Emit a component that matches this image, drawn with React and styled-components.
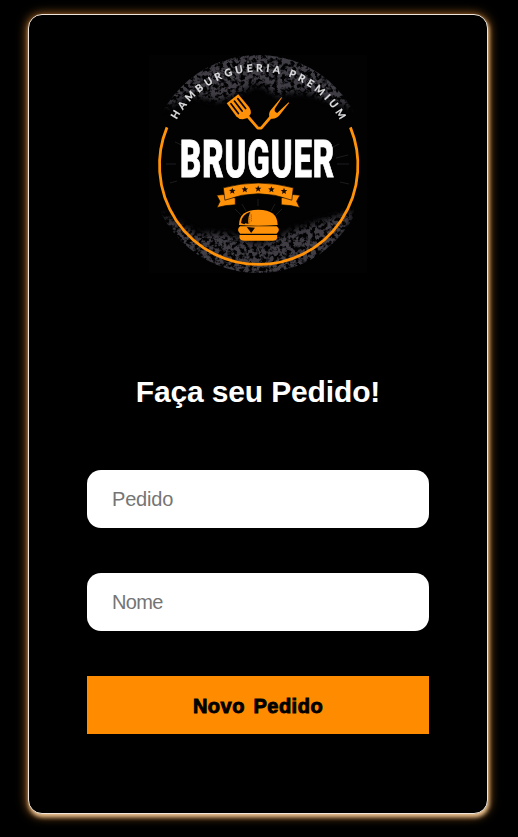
import React from "react";
import styled, { createGlobalStyle } from "styled-components";

const GlobalStyle = createGlobalStyle`
  * { box-sizing: border-box; }
  body { margin: 0; background: #000; font-family: "Liberation Sans", Arial, sans-serif; }
`;

const Page = styled.main`
  min-height: 837px;
  padding: 14px 30px 0 28px;
  background: #000;
`;

const Card = styled.section`
  display: flex;
  flex-direction: column;
  align-items: center;
  height: 800px;
  padding-top: 40px;
  background: #000;
  border: 1px solid #eee6dc;
  border-radius: 14px;
  box-shadow: 1px 3px 4px rgba(255, 218, 170, 0.85), 0 1px 11px rgba(255, 150, 50, 0.85);
`;

const LogoArt = styled.svg`
  display: block;
  width: 218px;
  height: 218px;
  overflow: visible;
`;

const Title = styled.h1`
  margin: 102px 0 0;
  color: #fff;
  font-size: 30px;
  font-weight: 700;
  line-height: 34px;
  letter-spacing: -0.15px;
`;

const Form = styled.form`
  display: flex;
  flex-direction: column;
  gap: 45px;
  width: 342px;
  margin-top: 61px;
`;

const Field = styled.input`
  height: 58px;
  padding: 0 25px;
  border: 0;
  border-radius: 14px;
  background: #fff;
  font: 20px "Liberation Sans", Arial, sans-serif;
  letter-spacing: ${({ $tracking }) => $tracking};
  &::placeholder { color: #757575; }
`;

const SubmitButton = styled.button`
  height: 58px;
  padding: 2px 0 0;
  border: 0;
  background: #ff8c00;
  color: #000;
  font: 700 20px "Liberation Sans", Arial, sans-serif;
  letter-spacing: 0.5px;
  word-spacing: 2.5px;
  -webkit-text-stroke: 0.9px #000;
`;

const starShape = "M0-3.6 1-1.2 3.6-1.1 1.6.6 2.3 3.2 0 1.7-2.3 3.2-1.6.6-3.6-1.1-1-1.2Z";
const stars = [[83.3, 135.9], [95.8, 134.4], [109.2, 133.8], [122.4, 134.4], [135, 136.1]];

function Logo() {
  return (
    <LogoArt viewBox="0 0 218 218" role="img" aria-label="Bruguer">
      <defs>
        <filter id="grain" x="0" y="0" width="100%" height="100%" colorInterpolationFilters="sRGB">
          <feTurbulence type="fractalNoise" baseFrequency="0.24" numOctaves="4" seed="8" />
          <feColorMatrix values="0 0 0 0 .25  0 0 0 0 .24  0 0 0 0 .27  5 0 0 0 -1.85" />
          <feComposite in2="SourceGraphic" operator="in" />
        </filter>
        <filter id="soft" x="-10%" y="-20%" width="120%" height="140%"><feGaussianBlur stdDeviation="3" /></filter>
        <clipPath id="disc"><circle cx="109.3" cy="109" r="109" /></clipPath>
        <path id="arc" d="M16.3 109.5A93 93 0 0 1 202.3 109.5" />
      </defs>
      <rect width="218" height="218" fill="#020203" />
      <g clipPath="url(#disc)">
        <g filter="url(#grain)">
          <path filter="url(#soft)" d="M12 54Q45-12 109-4 175-12 205 54L172 42Q145 32 130 41L109 28 90 38 70 46 45 40Z" />
          <path filter="url(#soft)" d="M12 158 48 179 75 178 109 190 145 175 205 156Q180 230 109 224 35 222 12 158Z" />
        </g>
      </g>
      <path
        d="M26 87l9 4M17 109h10M21 128l7-2M182 93l8-4M187 103l12-3M188 109h12M191 127l9 2M92 160l-6-6M97 156l-4-7M122 156l4-7M127 160l6-6M109 151v-7"
        stroke="#1d1b1e"
        fill="none"
      />
      <path d="M18 72.4A99.2 99.2 0 1 0 201.4 72.4" fill="none" stroke="#ff9208" strokeWidth="2.8" />
      <text fill="#dedee0" stroke="#dedee0" strokeWidth=".2" fontFamily="Lato, sans-serif" fontSize="10.3" fontWeight="700">
        <textPath href="#arc" startOffset="46.5" textLength="199" lengthAdjust="spacing">HAMBURGUERIA PREMIUM</textPath>
      </text>

      <g fill="#ff9208">
        <path d="M77.7 48.3 89.3 39.3 99.6 51.5Q102.6 55.5 101.6 59L98.5 63 93.8 64.3Q90 64.4 87.2 61.2Z" />
        <path d="M121.3 63.5Q119 60 121 56L132.4 42.2 133 42.7 125.8 53.8Q125 57 128.2 58L139.6 47.3 140.1 47.9 130.5 60.3Q126.8 64.6 121.3 63.5Z" />
      </g>
      <path d="M98 60.5 108.9 73.2H112.2L123 60.5" fill="none" stroke="#ff9208" strokeWidth="2.8" strokeLinejoin="round" />
      <path d="M82 48.7 89.4 58.5M85.4 46.1 93.1 56M88.8 43.6 96.6 53.5" stroke="#080503" strokeWidth="1.7" strokeLinecap="round" />

      <g transform="translate(31 121.6) scale(.66 1)">
        <text fill="#fff" stroke="#fff" strokeWidth=".9" fontFamily="Roboto, sans-serif" fontSize="52.5" fontWeight="900" letterSpacing="1.5" textLength="235" lengthAdjust="spacingAndGlyphs">BRUGUER</text>
      </g>

      <g fill="#ff9208" stroke="#140b02" strokeWidth=".7">
        <path d="M75 139.5 67.7 140.2 71 146.3 68 152.5Q77 150 86.3 149.8V143Z" />
        <path d="M143.6 139.5 151 140.2 147.6 146.3 150.6 152.5Q141.6 150 132.3 149.8V143Z" />
        <path d="M74.3 132.8Q109.3 123.2 144.3 132.8L142.8 145.2Q109.3 132.2 75.9 145.2Z" />
      </g>
      <g fill="#140b02">
        {stars.map(([x, y]) => <path key={x} d={starShape} transform={`translate(${x} ${y}) scale(.9)`} />)}
      </g>

      <g fill="#ff9208">
        <path d="M90 170Q90 154.7 109.3 154.7T128.7 170Q109 171.5 90 170Z" />
        <path d="M91 171.2H127.8Q132 174.8 127.6 178.8H91.2Q87 174.8 91 171.2Z" />
        <path d="M90.5 180H128.2V182.5Q127.8 185.8 123.5 185.8H95.5Q91 185.8 90.5 182.5Z" />
      </g>
      <g fill="#0b0602">
        <path d="M92 168Q92.5 159.7 101.5 156.8 98.5 162 99.5 169L96.5 168.3 95.3 169.3Z" />
        <path d="M97.8 172 106 172.8 102.2 178Z" />
      </g>
      <path d="M101 158.5 100.7 168.5M102.5 159.5V167" stroke="#7a4507" strokeWidth=".7" strokeDasharray="1 .8" />
    </LogoArt>
  );
}

export default function App() {
  return (
    <>
      <GlobalStyle />
      <Page>
        <Card>
          <Logo />
          <Title>Faça seu Pedido!</Title>
          <Form>
            <Field placeholder="Pedido" $tracking="-0.2px" />
            <Field placeholder="Nome" $tracking="-0.7px" />
            <SubmitButton type="button">Novo Pedido</SubmitButton>
          </Form>
        </Card>
      </Page>
    </>
  );
}
